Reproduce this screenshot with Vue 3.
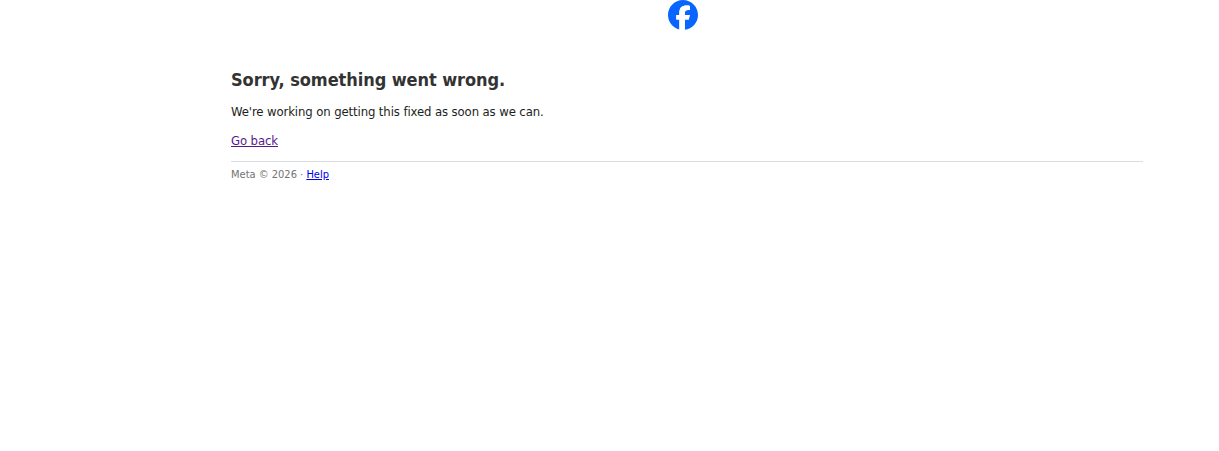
<template>
  <div class="page">
    <div class="logo">
      <svg width="30" height="30" viewBox="0 0 36 36" aria-label="Facebook">
        <path fill="#0866ff" d="M36 18C36 8.06 27.94 0 18 0S0 8.06 0 18c0 8.44 5.81 15.52 13.65 17.46V23.49H9.94V18h3.71v-2.37c0-6.13 2.77-8.96 8.79-8.96 1.14 0 3.1.22 3.9.45v4.98c-.42-.05-1.16-.07-2.08-.07-2.95 0-4.09 1.12-4.09 4.03V18h5.88l-1.01 5.49h-4.87v12.35C29.07 34.77 36 27.2 36 18z"/>
        <path fill="#fff" d="M25.05 23.49 26.06 18h-5.88v-1.94c0-2.91 1.14-4.03 4.09-4.03.92 0 1.66.02 2.08.07V7.12c-.8-.23-2.76-.45-3.9-.45-6.02 0-8.79 2.83-8.79 8.96V18H9.94v5.49h3.71v11.97c1.39.35 2.85.54 4.35.54.74 0 1.46-.05 2.18-.13V23.49h4.87z"/>
      </svg>
    </div>
    <h1 class="title">Sorry, something went wrong.</h1>
    <p class="text">We're working on getting this fixed as soon as we can.</p>
    <p class="back"><a href="#" class="visited">Go back</a></p>
    <div class="footer">
      <span>Meta © 2026 · </span><a href="#" class="help">Help</a>
    </div>
  </div>
</template>

<script setup>
</script>

<style>
html, body {
  background: #fff;
}
</style>

<style scoped>
.page {
  width: 912px;
  margin-left: 231px;
  font-family: "DejaVu Sans Condensed", "DejaVu Sans", sans-serif;
  font-stretch: condensed;
  color: #1c1e21;
}

.logo {
  display: flex;
  justify-content: center;
  padding-right: 8px;
  height: 30px;
}

.title {
  margin: 38px 0 0;
  font-size: 18px;
  letter-spacing: -0.07px;
  line-height: 24px;
  font-weight: 700;
  color: #333;
}

.text {
  margin: 12px 0 0;
  font-size: 13px;
  letter-spacing: -0.11px;
  line-height: 16px;
}

.back {
  margin: 13px 0 0;
  font-size: 13px;
  letter-spacing: -0.11px;
  line-height: 16px;
}

.visited {
  color: #551a8b;
}

.footer {
  margin-top: 12px;
  padding-top: 6px;
  border-top: 1px solid #dadde1;
  font-size: 11px;
  line-height: 14px;
  color: #737373;
}

.help {
  color: #00e;
}
</style>
